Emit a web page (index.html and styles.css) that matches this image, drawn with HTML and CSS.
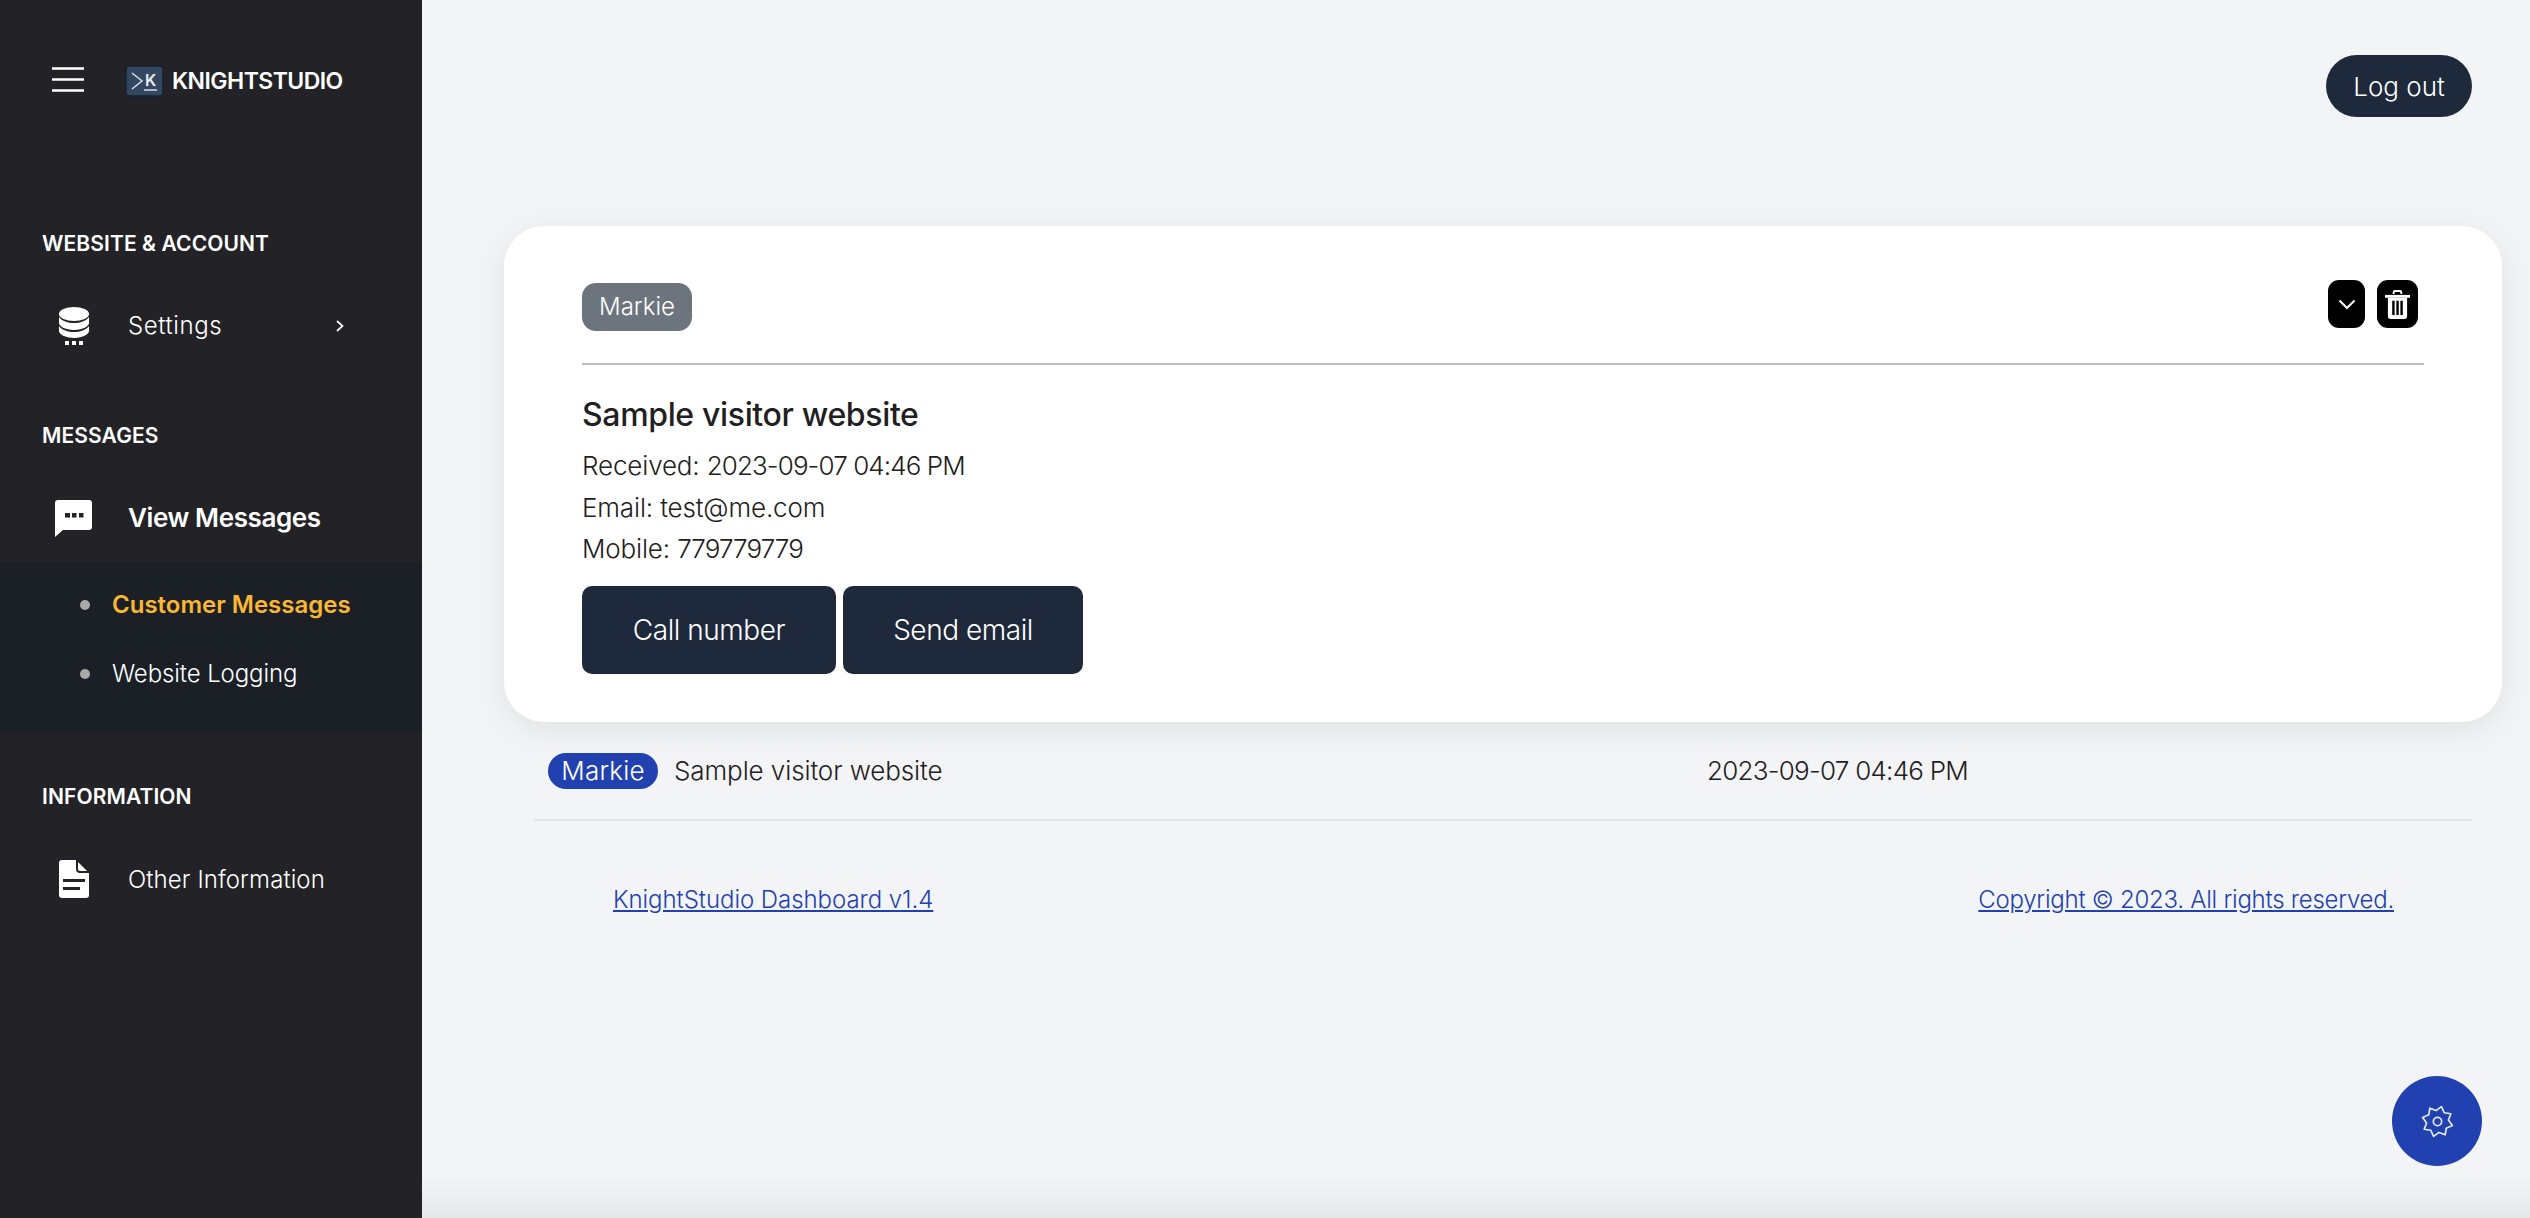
FILE: index.html
```html
<!DOCTYPE html>
<html lang="en">
<head>
<meta charset="utf-8">
<title>KnightStudio Dashboard</title>
<link rel="stylesheet" href="styles.css">
</head>
<body>
<div class="app">
  <aside class="sidebar">
    <div class="brand">
      <svg class="burger" viewBox="0 0 32 25"><path d="M0 1.500h32M0 12.500h32M0 23.500h32" stroke="#fff" stroke-width="2.400"/></svg>
      <svg class="logo" viewBox="0 0 39 32"><rect x="1" y="1" width="37" height="30" rx="3" fill="#334860" stroke="#17202e" stroke-width="1.500"/><path d="M7 8l10 8-10 8" fill="none" stroke="#d5dde6" stroke-width="1.600"/><text x="20" y="21" class="logo-k">K</text><path d="M19 25h13" stroke="#d5dde6" stroke-width="1.500"/></svg>
      <span class="brand-name">KNIGHTSTUDIO</span>
    </div>
    <h2 class="section section-first">WEBSITE &amp; ACCOUNT</h2>
    <div class="item">
      <svg class="icon" viewBox="0 0 30 38"><ellipse cx="15" cy="7" rx="15" ry="7" fill="#fff"/><path d="M0 10c3 4 9 6 15 6s12-2 15-6v6c0 3-6 7-15 7S0 19 0 16z" fill="#fff"/><path d="M0 19c3 4 9 6 15 6s12-2 15-6v5c0 3-6 7-15 7S0 27 0 24z" fill="#fff"/><path d="M6 34h4v4H6zM13 34h4v4h-4zM20 34h4v4h-4z" fill="#fff"/></svg>
      <span class="item-text item-settings">Settings</span>
      <svg class="chev" viewBox="0 0 8 12"><path d="M1 1l5.500 5L1 11" fill="none" stroke="#fff" stroke-width="1.700"/></svg>
    </div>
    <h2 class="section section-msg">MESSAGES</h2>
    <div class="item item-open">
      <svg class="icon-chat" viewBox="0 0 37 37"><path d="M3 0h31a3 3 0 0 1 3 3v24a3 3 0 0 1-3 3H8l-8 7V3a3 3 0 0 1 3-3z" fill="#fff"/><path d="M10 13h5v4.500h-5zM17 13h4.500v4.500H17zM24 13h4.500v4.500H24z" fill="#232327"/></svg>
      <span class="item-text item-strong">View Messages</span>
    </div>
    <ul class="submenu">
      <li class="sub-item sub-active">Customer Messages</li>
      <li class="sub-item">Website Logging</li>
    </ul>
    <h2 class="section section-info">INFORMATION</h2>
    <div class="item">
      <svg class="icon" viewBox="0 0 30 38"><path d="M3 0h14l13 13v22a3 3 0 0 1-3 3H3a3 3 0 0 1-3-3V3a3 3 0 0 1 3-3z" fill="#fff"/><path d="M18 0v9a3 3 0 0 0 3 3h9" fill="none" stroke="#232327" stroke-width="2"/><path d="M4 19h22v3H4zM4 27h17v3H4z" fill="#232327"/></svg>
      <span class="item-text">Other Information</span>
    </div>
  </aside>
  <main class="main">
    <div class="topbar"><button class="logout">Log out</button></div>
    <section class="card">
      <div class="card-head">
        <span class="tag">Markie</span>
        <div class="actions">
          <button class="act act-chev"><svg class="act-svg" viewBox="0 0 18 11"><path d="M1.500 1.500L9 9l7.500-7.500" fill="none" stroke="#fff" stroke-width="2"/></svg></button>
          <button class="act act-trash"><svg class="trash-svg" viewBox="0 0 26 30"><path d="M9 4V2.500A1.500 1.500 0 0 1 10.500 1h5A1.500 1.500 0 0 1 17 2.500V4" fill="none" stroke="#fff" stroke-width="2"/><path d="M0 5h26v3H0z" fill="#fff"/><path d="M3 8h20v19a3 3 0 0 1-3 3H6a3 3 0 0 1-3-3z" fill="#fff"/><path d="M7.500 11h2.500v15H7.500zM11.800 11h2.500v15h-2.500zM16 11h2.500v15H16z" fill="#000"/></svg></button>
        </div>
      </div>
      <h1 class="title">Sample visitor website</h1>
      <p class="line">Received: <span class="nums nums-tight">2023-09-07 04:46 PM</span></p>
      <p class="line">Email: test@me.com</p>
      <p class="line">Mobile: <span class="nums nums-tight">779779779</span></p>
      <div class="buttons">
        <button class="cta cta-call">Call number</button>
        <button class="cta cta-mail">Send email</button>
      </div>
    </section>
    <div class="row">
      <span class="pill">Markie</span>
      <span class="row-title">Sample visitor website</span>
      <span class="nums">2023-09-07 04:46 PM</span>
    </div>
    <footer class="footer">
      <a class="foot-link foot-left" href="#">KnightStudio Dashboard v1.4</a>
      <a class="foot-link foot-right" href="#">Copyright © 2023. All rights reserved.</a>
    </footer>
  </main>
</div>
<button class="fab"><svg class="gear" viewBox="-15 -15 30 30"><polygon points="13.52,3.62 7.93,6.09 7,12.12 1.31,9.91 -3.62,13.52 -6.09,7.93 -12.12,7 -9.91,1.31 -13.52,-3.62 -7.93,-6.09 -7,-12.12 -1.31,-9.91 3.62,-13.52 6.09,-7.93 12.12,-7 9.91,-1.31" fill="none" stroke="#e6eaf6" stroke-width="1.500" stroke-linejoin="round"/><circle r="3.800" fill="none" stroke="#e6eaf6" stroke-width="1.500"/></svg></button>
</body>
</html>
```
FILE: styles.css
```css
* { box-sizing: border-box; }
html, body { margin: 0; height: 100%; }
body { font-family: Inter, "Noto Sans", sans-serif; background: #f3f4f6; color: #1f2022; overflow: hidden; }
button { font-family: inherit; border: 0; cursor: pointer; }
.app { display: flex; height: 1218px; }

.sidebar { width: 422px; flex: none; background: #232327; color: #fff; }
.brand { display: flex; align-items: center; height: 32px; margin-top: 65px; padding-left: 52px; }
.burger { width: 32px; height: 25px; margin-right: 41px; margin-top: -4px; }
.logo { width: 39px; height: 32px; margin-right: 8px; }
.logo-k { font: 600 16px Inter, sans-serif; fill: #e8edf2; }
.brand-name { font-size: 23px; font-weight: 600; letter-spacing: -0.55px; }
.section { margin: 0; padding-left: 42px; font-size: 21px; line-height: 26px; font-weight: 600; letter-spacing: 0.1px; }
.section-first { margin-top: 134px; }
.section-msg { margin-top: 57px; }
.section-info { margin-top: 52px; }
.item { display: flex; align-items: center; height: 80px; margin-top: 29px; padding: 0 78px 0 59px; }
.icon { width: 30px; height: 38px; flex: none; margin-right: 39px; }
.icon-chat { width: 37px; height: 37px; flex: none; margin-left: -4px; margin-right: 36px; }
.item-text { font-size: 24px; font-weight: 300; letter-spacing: 0.1px; }
.item-settings { letter-spacing: 0.6px; margin-top: -1px; }
.item-strong { font-size: 26px; font-weight: 600; letter-spacing: -0.4px; margin-top: -2px; }
.chev { width: 8px; height: 12px; margin-left: auto; }
.item-open { height: 88px; margin-top: 25px; }
.submenu { list-style: none; margin: 0; padding: 22px 0 10px 112px; background: #1b2027; }
.sub-item { position: relative; height: 69px; font-size: 24px; line-height: 42px; font-weight: 300; letter-spacing: -0.1px; }
.sub-item::before { content: ""; position: absolute; left: -32px; top: 16px; width: 10px; height: 10px; border-radius: 50%; background: #a9a9a9; }
.sub-active { color: #fbb731; font-weight: 600; letter-spacing: 0; }

.main { flex: 1; min-width: 0; padding-left: 82px; padding-right: 28px; background: linear-gradient(to bottom, #f3f4f6 calc(100% - 42px), #e6e7e9 100%); }
.topbar { display: flex; justify-content: flex-end; padding-top: 55px; padding-right: 30px; height: 226px; }
.logout { width: 146px; height: 62px; border-radius: 31px; background: #1e293b; color: #fff; font-size: 26px; font-weight: 300; }
.card { height: 496px; padding: 54px 78px 0; background: #fff; border-radius: 40px; box-shadow: 0 8px 32px rgba(0,0,0,.08); }
.card-head { display: flex; justify-content: space-between; height: 85px; border-bottom: 2px solid #bfbfbf; }
.tag { width: 110px; height: 48px; margin-top: 3px; border-radius: 14px; background: #6c757d; color: #fff; font-size: 24px; font-weight: 300; line-height: 48px; text-align: center; }
.actions { display: flex; gap: 12px; padding-right: 6px; }
.act { height: 48px; padding: 0; border-radius: 11px; background: #000; display: flex; align-items: center; justify-content: center; }
.act-chev { width: 37px; }
.act-trash { width: 41px; }
.act-svg { width: 18px; height: 11px; }
.trash-svg { width: 25px; height: 29px; }
.title { margin: 28px 0 8px; font-size: 32px; line-height: 44px; font-weight: 500; letter-spacing: -0.35px; }
.line { margin: 0; font-size: 26px; line-height: 41.500px; font-weight: 300; letter-spacing: -0.15px; }
.nums { letter-spacing: -0.75px; }
.nums-tight { letter-spacing: -0.9px; }
.buttons { display: flex; gap: 7px; margin-top: 16px; }
.cta { height: 88px; border-radius: 10px; background: #1e293b; color: #fff; font-size: 28px; font-weight: 300; letter-spacing: -0.45px; padding: 0; }
.cta-call { width: 254px; }
.cta-mail { width: 240px; }
.row { display: flex; align-items: center; height: 99px; margin: 0 30px; padding-left: 14px; border-bottom: 2px solid #e5e7eb; font-size: 26px; font-weight: 300; }
.pill { width: 110px; height: 36px; border-radius: 18px; background: #2241b0; color: #fff; text-align: center; line-height: 36px; letter-spacing: 0.2px; }
.row-title { margin-left: 16px; width: 1033px; letter-spacing: -0.1px; }
.footer { display: flex; justify-content: space-between; margin: 0 108px 0 109px; padding-top: 62px; font-size: 24px; font-weight: 300; line-height: 34px; }
.foot-link { color: #2241b0; }
.foot-left { letter-spacing: -0.05px; }
.foot-right { letter-spacing: -0.25px; }
.fab { position: fixed; left: 2392px; top: 1076px; width: 90px; height: 90px; padding: 0; border-radius: 50%; background: #2241b0; display: flex; align-items: center; justify-content: center; }
.gear { width: 33px; height: 33px; }
```
